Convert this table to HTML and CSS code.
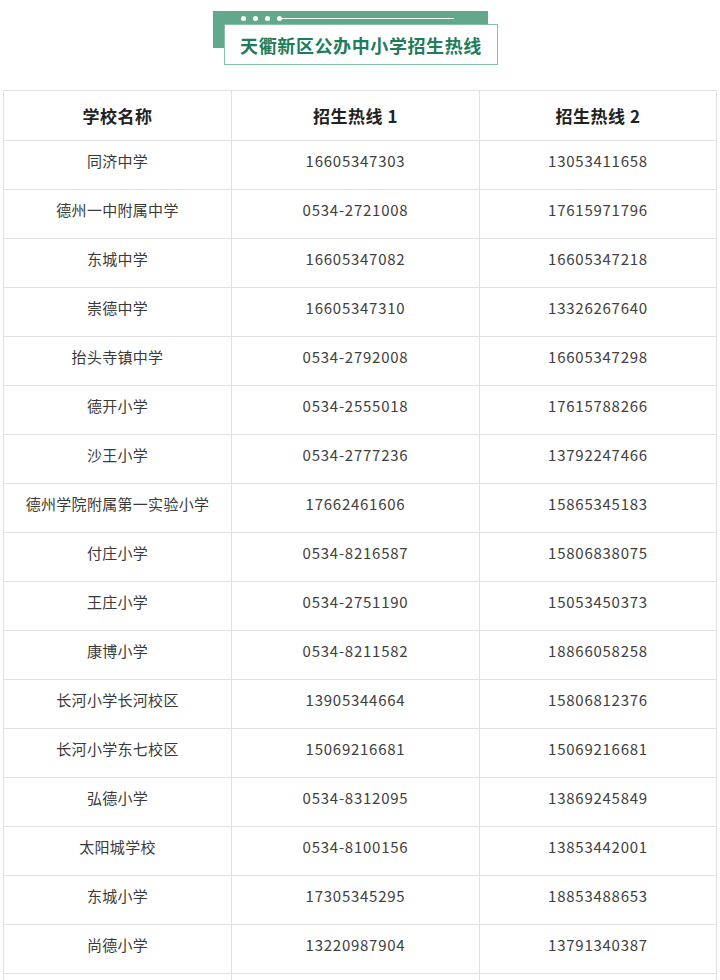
FILE: index.html
```html
<!DOCTYPE html>
<html lang="zh">
<head>
<meta charset="utf-8">
<link rel="stylesheet" href="styles.css">
</head>
<body>
<div class="title-wrap">
  <div class="badge">
    <div class="badge-deco">
      <span class="dot"></span><span class="dot"></span><span class="dot"></span><span class="dot"></span><span class="line"></span>
    </div>
    <div class="badge-box">天衢新区公办中小学招生热线</div>
  </div>
</div>
<table class="hotline">
  <colgroup><col class="c1"><col class="c2"><col class="c3"></colgroup>
  <thead>
    <tr><th>学校名称</th><th>招生热线 1</th><th>招生热线 2</th></tr>
  </thead>
  <tbody>
    <tr><td>同济中学</td><td>16605347303</td><td>13053411658</td></tr>
    <tr><td>德州一中附属中学</td><td>0534-2721008</td><td>17615971796</td></tr>
    <tr><td>东城中学</td><td>16605347082</td><td>16605347218</td></tr>
    <tr><td>崇德中学</td><td>16605347310</td><td>13326267640</td></tr>
    <tr><td>抬头寺镇中学</td><td>0534-2792008</td><td>16605347298</td></tr>
    <tr><td>德开小学</td><td>0534-2555018</td><td>17615788266</td></tr>
    <tr><td>沙王小学</td><td>0534-2777236</td><td>13792247466</td></tr>
    <tr><td>德州学院附属第一实验小学</td><td>17662461606</td><td>15865345183</td></tr>
    <tr><td>付庄小学</td><td>0534-8216587</td><td>15806838075</td></tr>
    <tr><td>王庄小学</td><td>0534-2751190</td><td>15053450373</td></tr>
    <tr><td>康博小学</td><td>0534-8211582</td><td>18866058258</td></tr>
    <tr><td>长河小学长河校区</td><td>13905344664</td><td>15806812376</td></tr>
    <tr><td>长河小学东七校区</td><td>15069216681</td><td>15069216681</td></tr>
    <tr><td>弘德小学</td><td>0534-8312095</td><td>13869245849</td></tr>
    <tr><td>太阳城学校</td><td>0534-8100156</td><td>13853442001</td></tr>
    <tr><td>东城小学</td><td>17305345295</td><td>18853488653</td></tr>
    <tr><td>尚德小学</td><td>13220987904</td><td>13791340387</td></tr>
    <tr><td>&nbsp;</td><td>&nbsp;</td><td>&nbsp;</td></tr>
  </tbody>
</table>
</body>
</html>
```
FILE: styles.css
```css
html, body {
  margin: 0;
  padding: 0;
  background: #ffffff;
}
body {
  font-family: "Noto Sans CJK SC", "Noto Sans", sans-serif;
  color: #333333;
  width: 720px;
  height: 980px;
  overflow: hidden;
}
.title-wrap {
  height: 90px;
  padding-top: 11px;
  box-sizing: border-box;
}
.badge {
  position: relative;
  margin-left: 213px;
  width: 275px;
  height: 37px;
  background: #62a98b;
}
.badge-deco {
  display: flex;
  align-items: center;
  height: 13px;
  padding-left: 28px;
  padding-top: 1px;
  gap: 7px;
}
.dot {
  width: 5px;
  height: 5px;
  border-radius: 50%;
  background: #ffffff;
}
.line {
  margin-left: -7px;
  width: 172px;
  height: 1px;
  background: #ffffff;
}
.badge-box {
  position: absolute;
  left: 11px;
  top: 13px;
  width: 272px;
  height: 38px;
  background: #ffffff;
  border: 1px solid #86c2a8;
  display: flex;
  align-items: center;
  justify-content: center;
  padding-top: 1px;
  box-sizing: content-box;
  font-size: 18px;
  font-weight: 700;
  letter-spacing: 0.6px;
  color: #217c5c;
}
.hotline {
  margin-left: 3px;
  width: 713px;
  border-collapse: collapse;
  table-layout: fixed;
}
.c1 { width: 228px; }
.c2 { width: 248px; }
.c3 { width: 237px; }
.hotline th,
.hotline td {
  border: 1px solid #e2e2e2;
  text-align: center;
  padding: 0;
}
.hotline th {
  height: 49px;
  font-size: 17px;
  font-weight: 700;
  color: #222222;
  letter-spacing: 0.5px;
}
.hotline td {
  height: 49px;
  font-size: 15px;
  letter-spacing: 0.3px;
  color: #3a3a3a;
  padding-bottom: 10px;
  box-sizing: border-box;
}
.hotline td + td {
  letter-spacing: 0.75px;
  color: #404040;
}
```
